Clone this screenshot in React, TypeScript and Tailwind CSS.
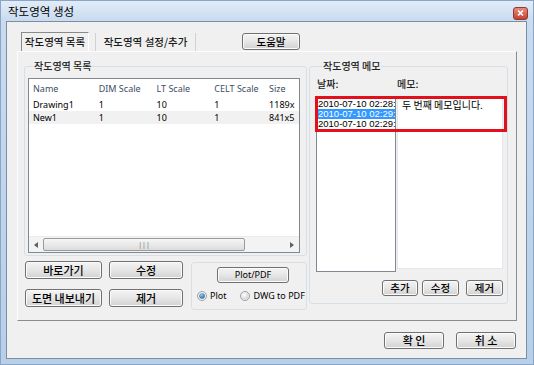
import React from "react";

const KR = "font-['Noto_Sans_CJK_KR',sans-serif]";
const LAT = "font-['Noto_Sans',sans-serif]";
const BTN =
  "flex items-center justify-center rounded-[3px] border border-[#707070] bg-linear-to-b from-[#f4f4f4] via-[#e6e6e6] to-[#d2d2d2] shadow-[inset_0_0_0_1px_#fbfbfb] text-black";

function Radio({ checked }: { checked: boolean }) {
  return (
    <svg width="10" height="10" viewBox="0 0 10 10">
      <defs>
        <radialGradient id={checked ? "rgc" : "rgu"} cx="0.4" cy="0.35" r="0.7">
          <stop offset="0" stopColor={checked ? "#8fd0ff" : "#ffffff"} />
          <stop offset="1" stopColor={checked ? "#1a5b99" : "#cfcfcf"} />
        </radialGradient>
      </defs>
      <circle cx="5" cy="5" r="4.5" fill="#f4f4f4" stroke="#8a8a8a" strokeWidth="0.8" />
      <circle cx="5" cy="5" r={checked ? 2.8 : 3.4} fill={`url(#${checked ? "rgc" : "rgu"})`} />
    </svg>
  );
}

function Arrow({ dir }: { dir: "l" | "r" }) {
  return (
    <svg width="4" height="6" viewBox="0 0 4 6">
      {dir === "l" ? <path d="M4 0 L0 3 L4 6 Z" fill="#606060" /> : <path d="M0 0 L4 3 L0 6 Z" fill="#606060" />}
    </svg>
  );
}

export default function App() {
  const cols = [
    { w: "w-[66px]", h: "Name", r1: "Drawing1", r2: "New1" },
    { w: "w-[58px]", h: "DIM Scale", r1: "1", r2: "1" },
    { w: "w-[58px]", h: "LT Scale", r1: "10", r2: "10" },
    { w: "w-[55px]", h: "CELT Scale", r1: "1", r2: "1" },
    { w: "w-[34px]", h: "Size", r1: "1189x", r2: "841x5" },
  ];
  return (
    <div className="w-[534px] h-[365px] bg-linear-to-b from-[#c9dcf1] to-[#b7cfe9] border border-[#8aa6c6] flex flex-col overflow-hidden">
      {/* title bar */}
      <div className="h-[20px] flex items-center justify-between pl-[7px] pr-[5px] bg-linear-to-b from-[#e2ecf8] to-[#c8dbf0]">
        <span className={`${KR} text-[11.5px] leading-[14px] text-black`}>작도영역 생성</span>
        <div className="mt-[4px] w-[15px] h-[13px] rounded-[3px] border border-[#8e3a30] bg-linear-to-b from-[#e88a7c] to-[#c6402f] flex items-center justify-center">
          <svg width="7" height="6" viewBox="0 0 7 6">
            <path d="M1 0.5 L6 5.5 M6 0.5 L1 5.5" stroke="#fff" strokeWidth="1.6" />
          </svg>
        </div>
      </div>

      {/* client */}
      <div className="ml-[5px] mr-[6px] h-[338px] border border-[#7d8ea3] bg-[#f0f0f0] flex flex-col">
        <div className="ml-[10px] w-[500px] flex flex-col">
          {/* tab strip */}
          <div className="mt-[10px] h-[19px] flex items-end pl-[4px]">
            <div className={`${KR} w-[68px] h-[19px] border-l border-t border-[#8a8a8a] border-r border-r-[#ffffff] flex items-center justify-center text-[10.5px] font-medium text-[#1a1a1a]`}>
              작도영역 목록
            </div>
            <div className={`${KR} ml-[6px] w-[101px] h-[18px] border-l border-r border-[#d2d2d2] flex items-center justify-center text-[10.5px] font-medium text-[#1a1a1a]`}>
              작도영역 설정/추가
            </div>
            <div className={`${BTN} ${KR} ml-[46px] mb-[1px] w-[58px] h-[17px] text-[10.5px] font-medium`}>도움말</div>
          </div>

          {/* tab panel */}
          <div className="w-[500px] h-[270px] border border-t-[#fcfcfc] border-l-[#fcfcfc] border-r-[#8c8c8c] border-b-[#8c8c8c] pt-[8px] pl-[6px] flex gap-[2px]">
            {/* left column */}
            <div className="w-[283px] flex flex-col">
              <fieldset className="w-[283px] h-[196px] border border-[#d5dfe5] rounded-[3px] px-[3px]">
                <legend className={`${KR} ml-[5px] px-[1px] text-[10px] leading-[12px] font-medium text-[#222]`}>작도영역 목록</legend>
                <div className={`${LAT} mt-[6px] w-[272px] h-[175px] border border-[#828790] bg-white flex flex-col text-[9px]`}>
                  <div className="h-[19px] flex items-center text-[#3c4e66]">
                    {cols.map((c) => (
                      <div key={c.h} className={`${c.w} pl-[4px] whitespace-nowrap overflow-hidden`}>{c.h}</div>
                    ))}
                  </div>
                  <div className="h-[13px] flex items-center text-black">
                    {cols.map((c) => (
                      <div key={c.h} className={`${c.w} pl-[4px] whitespace-nowrap overflow-hidden`}>{c.r1}</div>
                    ))}
                  </div>
                  <div className="h-[13px] flex items-center text-black bg-[#f1f1f1]">
                    {cols.map((c) => (
                      <div key={c.h} className={`${c.w} pl-[4px] whitespace-nowrap overflow-hidden`}>{c.r2}</div>
                    ))}
                  </div>
                  <div className="flex-1" />
                  <div className="h-[16px] bg-[#f3f3f3] border-t border-[#ececec] flex items-center">
                    <div className="w-[14px] flex justify-center"><Arrow dir="l" /></div>
                    <div className="w-[202px] h-[13px] rounded-[2px] border border-[#9a9a9a] bg-linear-to-b from-[#f6f6f6] to-[#dcdcdc] flex items-center justify-center">
                      <span className="text-[7px] leading-[7px] text-[#777] tracking-[0px]">|||</span>
                    </div>
                    <div className="flex-1" />
                    <div className="w-[14px] flex justify-center"><Arrow dir="r" /></div>
                  </div>
                </div>
              </fieldset>
              <div className="mt-[5px] flex">
                <div className="ml-[1px] grid grid-cols-[77px_74px] gap-[7px]">
                  <div className={`${BTN} ${KR} h-[18px] text-[11px] font-medium`}>바로가기</div>
                  <div className={`${BTN} ${KR} h-[18px] text-[11px] font-medium`}>수정</div>
                  <div className={`${BTN} ${KR} h-[18px] text-[11px] font-medium`}>도면 내보내기</div>
                  <div className={`${BTN} ${KR} h-[18px] text-[11px] font-medium`}>제거</div>
                </div>
                <div className="ml-[8px] mt-[1px] w-[116px] h-[48px] border border-[#dadfe3] rounded-[3px] flex flex-col items-center pt-[4px]">
                  <div className={`${BTN} ${LAT} ml-[8px] w-[72px] h-[16px] text-[9px]`}>Plot/PDF</div>
                  <div className={`${LAT} mt-[6px] w-full pl-[5px] flex items-center text-[9px] text-black`}>
                    <Radio checked />
                    <span className="ml-[3px]">Plot</span>
                    <span className="ml-[14px]"><Radio checked={false} /></span>
                    <span className="ml-[3px]">DWG to PDF</span>
                  </div>
                </div>
              </div>
            </div>

            {/* right column */}
            <fieldset className="w-[199px] h-[244px] border border-[#d5dfe5] rounded-[3px] pl-[6px] pr-[4px]">
              <legend className={`${KR} ml-[6px] px-[1px] text-[10px] leading-[12px] font-medium text-[#222]`}>작도영역 메모</legend>
              <div className={`${KR} mt-[6px] h-[12px] flex text-[10px] leading-[12px] font-medium text-[#222]`}>
                <span className="w-[81px] pl-[1px]">날짜:</span>
                <span>메모:</span>
              </div>
              <div className="relative mt-[7px] flex">
                <div className="w-[80px] h-[175px] border border-[#828790] bg-white pt-[1px] font-['Liberation_Sans',sans-serif] text-[9.5px] leading-[10px] overflow-hidden">
                  <div className="pl-[1px] whitespace-nowrap text-black">2010-07-10 02:28:</div>
                  <div className="pl-[1px] whitespace-nowrap text-white bg-[#3399ff]">2010-07-10 02:29:</div>
                  <div className="pl-[1px] whitespace-nowrap text-black">2010-07-10 02:29:</div>
                </div>
                <div className={`${KR} ml-[1px] w-[106px] h-[172px] border border-[#e3e6ea] bg-white pl-[4px] pt-[1px] text-[10px] leading-[12px] text-black`}>
                  두 번째 메모입니다.
                </div>
                <div className="absolute left-[-1px] top-[-1px] w-[192px] h-[36px] border-[3px] border-[#e3101c]" />
              </div>
              <div className="mt-[8px] flex justify-end">
                <div className={`${BTN} ${KR} w-[36px] h-[16px] text-[10.5px] font-medium`}>추가</div>
                <div className={`${BTN} ${KR} ml-[4px] w-[37px] h-[16px] text-[10.5px] font-medium`}>수정</div>
                <div className={`${BTN} ${KR} ml-[7px] w-[37px] h-[16px] text-[10.5px] font-medium`}>제거</div>
              </div>
            </fieldset>
          </div>
        </div>

        {/* bottom buttons */}
        <div className="mt-[11px] pr-[10px] flex justify-end gap-[12px]">
          <div className={`${BTN} ${KR} w-[60px] h-[17px] text-[11px] font-medium border-[#3c7fb1] shadow-[inset_0_0_0_1px_#c9e8f8]`}>확 인</div>
          <div className={`${BTN} ${KR} w-[60px] h-[17px] text-[11px] font-medium`}>취 소</div>
        </div>
      </div>
    </div>
  );
}
